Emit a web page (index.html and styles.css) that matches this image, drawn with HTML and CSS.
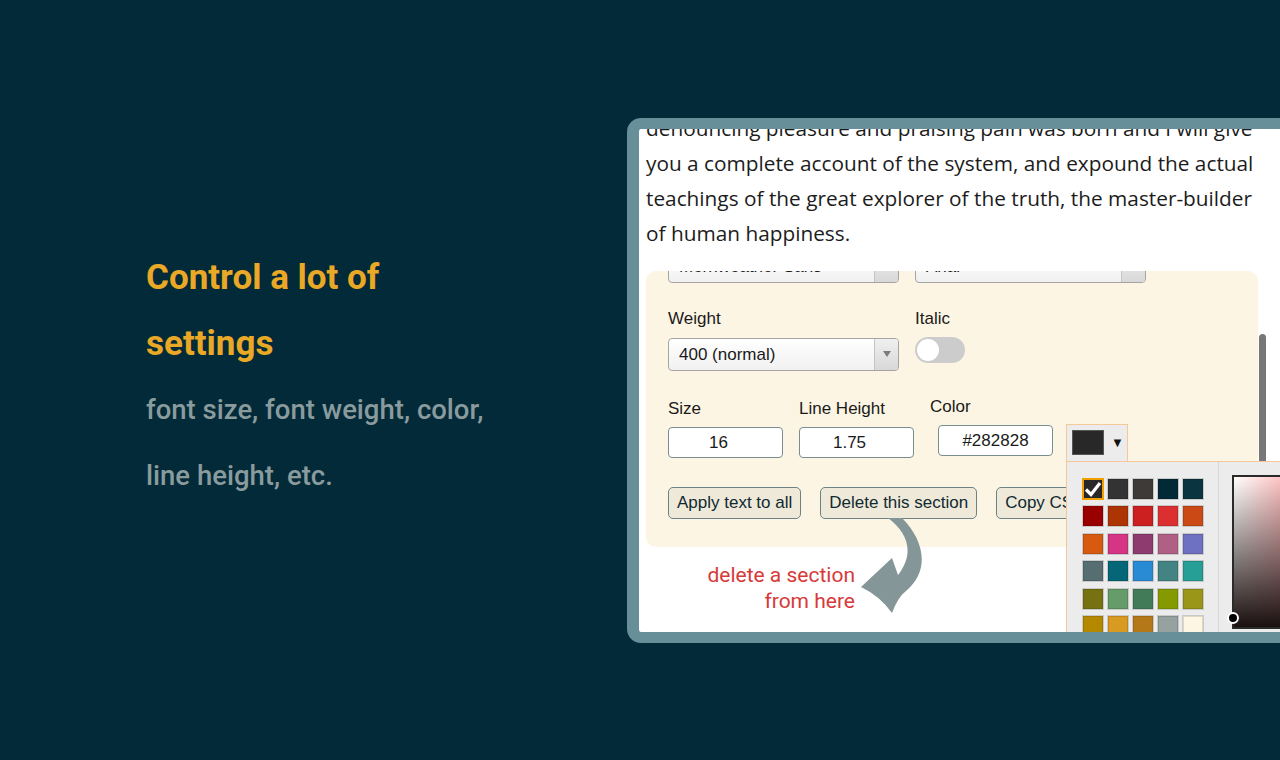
FILE: index.html
```html
<!DOCTYPE html>
<html lang="en">
<head>
    <meta charset="UTF-8">
    <meta name="viewport" content="width=device-width, initial-scale=1.0">
    <title>Control a lot of settings</title>
    <link rel="stylesheet" href="styles.css">
</head>
<body>
    <main class="slide">
        <section class="intro">
            <h1 class="intro-title">Control a lot of<br>settings</h1>
            <p class="intro-text">font size, font weight, color,<br>line height, etc.</p>
        </section>

        <div class="frame">
            <div class="screen">
                <p class="sample">
                    denouncing pleasure and praising pain was born and I will give<br>
                    you a complete account of the system, and expound the actual<br>
                    teachings of the great explorer of the truth, the master-builder<br>
                    of human happiness.
                </p>

                <div class="panel">
                    <div class="row row-fonts">
                        <div class="select"><span class="select-text">Merriweather Sans</span><span class="select-caret"></span></div>
                        <div class="select"><span class="select-text">Arial</span><span class="select-caret"></span></div>
                    </div>

                    <div class="row row-weight">
                        <div class="field field-wide">
                            <label>Weight</label>
                            <div class="select"><span class="select-text">400 (normal)</span><span class="select-caret"><i></i></span></div>
                        </div>
                        <div class="field">
                            <label>Italic</label>
                            <div class="toggle"><span class="knob"></span></div>
                        </div>
                    </div>

                    <div class="row row-size">
                        <div class="field">
                            <label>Size</label>
                            <div class="input input-number">16</div>
                        </div>
                        <div class="field">
                            <label>Line Height</label>
                            <div class="input input-number">1.75</div>
                        </div>
                        <div class="field field-color">
                            <label>Color</label>
                            <div class="input">#282828</div>
                        </div>
                        <div class="swatch-btn">
                            <span class="swatch-current"></span>
                            <span class="swatch-caret">&#9660;</span>
                        </div>
                    </div>

                    <div class="row row-buttons">
                        <button>Apply text to all</button>
                        <button>Delete this section</button>
                        <button>Copy CSS</button>
                    </div>
                </div>

                <p class="note">delete a section<br>from here</p>

                <svg class="note-arrow" width="70" height="100" viewBox="0 0 70 100">
                    <path d="M30 2 C50 17 57 37 40 59 L34 42 L3 71 Q22 80 34 97 Q40 81 48 75 C72 55 67 25 44 2 Z" fill="#849697"/>
                </svg>

                <div class="scrollbar"></div>

                <div class="palette">
                    <div class="palette-grid">
                        <span class="cell selected" style="background:#282828">
                            <svg width="18" height="18" viewBox="0 0 18 18"><path d="M2 9.5 L7 14.5 L16 3" fill="none" stroke="#fff" stroke-width="3.2"/></svg>
                        </span>
                        <span class="cell" style="background:#333333"></span>
                        <span class="cell" style="background:#3d3a37"></span>
                        <span class="cell" style="background:#022a36"></span>
                        <span class="cell" style="background:#0a3540"></span>

                        <span class="cell" style="background:#990000"></span>
                        <span class="cell" style="background:#ad3504"></span>
                        <span class="cell" style="background:#cc1f1f"></span>
                        <span class="cell" style="background:#dc3030"></span>
                        <span class="cell" style="background:#ca4915"></span>

                        <span class="cell" style="background:#d85a10"></span>
                        <span class="cell" style="background:#d53584"></span>
                        <span class="cell" style="background:#8e3b6f"></span>
                        <span class="cell" style="background:#b16085"></span>
                        <span class="cell" style="background:#6e71c2"></span>

                        <span class="cell" style="background:#566d72"></span>
                        <span class="cell" style="background:#056677"></span>
                        <span class="cell" style="background:#2a8bd5"></span>
                        <span class="cell" style="background:#438384"></span>
                        <span class="cell" style="background:#26a097"></span>

                        <span class="cell" style="background:#767111"></span>
                        <span class="cell" style="background:#669b6a"></span>
                        <span class="cell" style="background:#427b57"></span>
                        <span class="cell" style="background:#859a00"></span>
                        <span class="cell" style="background:#9a9718"></span>

                        <span class="cell" style="background:#b48900"></span>
                        <span class="cell" style="background:#d99a21"></span>
                        <span class="cell" style="background:#b57819"></span>
                        <span class="cell" style="background:#95a2a0"></span>
                        <span class="cell" style="background:#fdf6e3"></span>
                    </div>
                    <div class="palette-picker">
                        <div class="spectrum"><span class="spectrum-dot"></span></div>
                    </div>
                </div>
            </div>
        </div>
    </main>
</body>
</html>
```

FILE: styles.css
```css
body {
    margin: 0;
    background: #022a38;
    font-family: 'Roboto', 'Liberation Sans', sans-serif;
    overflow: hidden;
}
.slide {
    display: flex;
    align-items: center;
    height: 760px;
    padding-left: 146px;
}
.intro {
    flex: none;
    width: 481px;
    margin-top: -6px;
}
.intro-title {
    margin: 0;
    font-size: 35px;
    font-weight: 700;
    line-height: 66px;
    color: #e9a825;
}
.intro-text {
    margin: 0;
    font-size: 27.5px;
    font-weight: 500;
    line-height: 66px;
    color: #8a9b9e;
}
.frame {
    flex: none;
    width: 700px;
    height: 525px;
    box-sizing: border-box;
    border: 11px solid #668f9a;
    border-left-width: 12px;
    border-radius: 14px;
    background: #fff;
    overflow: hidden;
}
.screen {
    position: relative;
    height: 100%;
    overflow: hidden;
}
.sample {
    margin: -18px 0 0 7px;
    width: 640px;
    font-family: 'Open Sans', sans-serif;
    font-size: 20.8px;
    line-height: 35px;
    color: #1c1c1c;
    white-space: nowrap;
}
.panel {
    margin: 20px 0 0 7px;
    width: 612px;
    height: 276px;
    box-sizing: border-box;
    padding: 0 0 28px 22px;
    border-radius: 10px;
    background: #fdf5e3;
    overflow: hidden;
    font-family: 'Liberation Sans', Arial, sans-serif;
    font-size: 17px;
    color: #1a1a1a;
}
.row {
    display: flex;
    gap: 16px;
}
.row-fonts {
    margin-top: -21px;
}
.row-weight {
    margin-top: 27px;
}
.row-size {
    margin-top: 29px;
}
.row-buttons {
    margin-top: 29px;
    gap: 19px;
}
.field {
    display: flex;
    flex-direction: column;
    gap: 9px;
}
.field label {
    display: block;
    line-height: 18px;
}
.row-weight .field {
    gap: 10px;
}
.select {
    display: flex;
    width: 231px;
    height: 33px;
    box-sizing: border-box;
    border: 1px solid #a4a4a4;
    border-radius: 4px;
    background: linear-gradient(#ffffff, #f1f1f1);
    overflow: hidden;
}
.select-text {
    flex: 1;
    padding-left: 10px;
    line-height: 31px;
    white-space: nowrap;
}
.select-caret {
    width: 23px;
    border-left: 1px solid #c4c4c4;
    background: linear-gradient(#f0f0f0, #d8d8d8);
    display: flex;
    align-items: center;
    justify-content: center;
}
.select-caret i {
    border-left: 4px solid transparent;
    border-right: 4px solid transparent;
    border-top: 6px solid #7c7c7c;
}
.toggle {
    width: 50px;
    height: 26px;
    margin-top: -1px;
    border-radius: 13px;
    background: #cccccc;
    position: relative;
}
.knob {
    position: absolute;
    left: 2px;
    top: 2px;
    width: 22px;
    height: 22px;
    border-radius: 50%;
    background: #fff;
}
.input {
    width: 115px;
    height: 31px;
    box-sizing: border-box;
    border: 1px solid #7a8e90;
    border-radius: 4px;
    background: #fff;
    text-align: center;
    line-height: 29px;
}
.input-number {
    padding-right: 14px;
}
.field-color {
    margin: -2px 0 0 8px;
}
.field-color label {
    margin-left: -8px;
}
.swatch-btn {
    margin: 24px 0 -3px -3px;
    width: 62px;
    height: 37px;
    box-sizing: border-box;
    border: 1px solid #f5c89c;
    border-bottom: none;
    background: #ececec;
    display: flex;
    align-items: flex-start;
    padding: 5px 0 0 5px;
    gap: 7px;
    position: relative;
    z-index: 2;
}
.swatch-current {
    width: 32px;
    height: 25px;
    box-sizing: border-box;
    border: 1px solid #555;
    background: #282828;
}
.swatch-caret {
    font-size: 13px;
    line-height: 25px;
    color: #111;
}
button {
    height: 32px;
    padding: 0 8px;
    border: 1px solid #6d8284;
    border-radius: 5px;
    background: #efe9da;
    font-family: 'Liberation Sans', Arial, sans-serif;
    font-size: 17px;
    color: #0f2a30;
    white-space: nowrap;
}
.note {
    margin: 15px 0 0 0;
    width: 216px;
    text-align: right;
    font-family: 'Roboto', sans-serif;
    font-size: 21px;
    line-height: 26px;
    color: #d83939;
}
.note-arrow {
    position: absolute;
    left: 219px;
    top: 387px;
}
.scrollbar {
    position: absolute;
    left: 620px;
    top: 205px;
    width: 7px;
    height: 300px;
    border-radius: 4px;
    background: #777;
}
.palette {
    position: absolute;
    left: 427px;
    top: 332px;
    width: 260px;
    height: 220px;
    border: 1px solid #f5c89c;
    background: #ececec;
    display: flex;
}
.palette-grid {
    flex: none;
    width: 136px;
    padding: 16px 0 0 15px;
    border-right: 1px solid #d6d6d6;
    display: grid;
    grid-template-columns: repeat(5, 22px);
    grid-auto-rows: 22px;
    column-gap: 3px;
    row-gap: 5.5px;
    align-content: start;
}
.cell {
    box-sizing: border-box;
    border: 1px solid #c9c9c9;
    box-shadow: inset 0 0 0 1px rgba(0, 0, 0, 0.12);
    display: flex;
    align-items: center;
    justify-content: center;
}
.cell.selected {
    border: 2px solid #f0a000;
    box-shadow: none;
}
.palette-picker {
    flex: none;
    padding: 13px 0 0 13px;
}
.spectrum {
    width: 200px;
    height: 150px;
    border: 2px solid #2a2a2a;
    border-right: none;
    position: relative;
    background:
        linear-gradient(to bottom, rgba(0, 0, 0, 0), #1a1010),
        linear-gradient(to right, #ffffff, #ff0000);
}
.spectrum-dot {
    position: absolute;
    left: -7px;
    top: 135px;
    width: 8px;
    height: 8px;
    border-radius: 50%;
    background: #000;
    border: 2px solid #fff;
}
```
